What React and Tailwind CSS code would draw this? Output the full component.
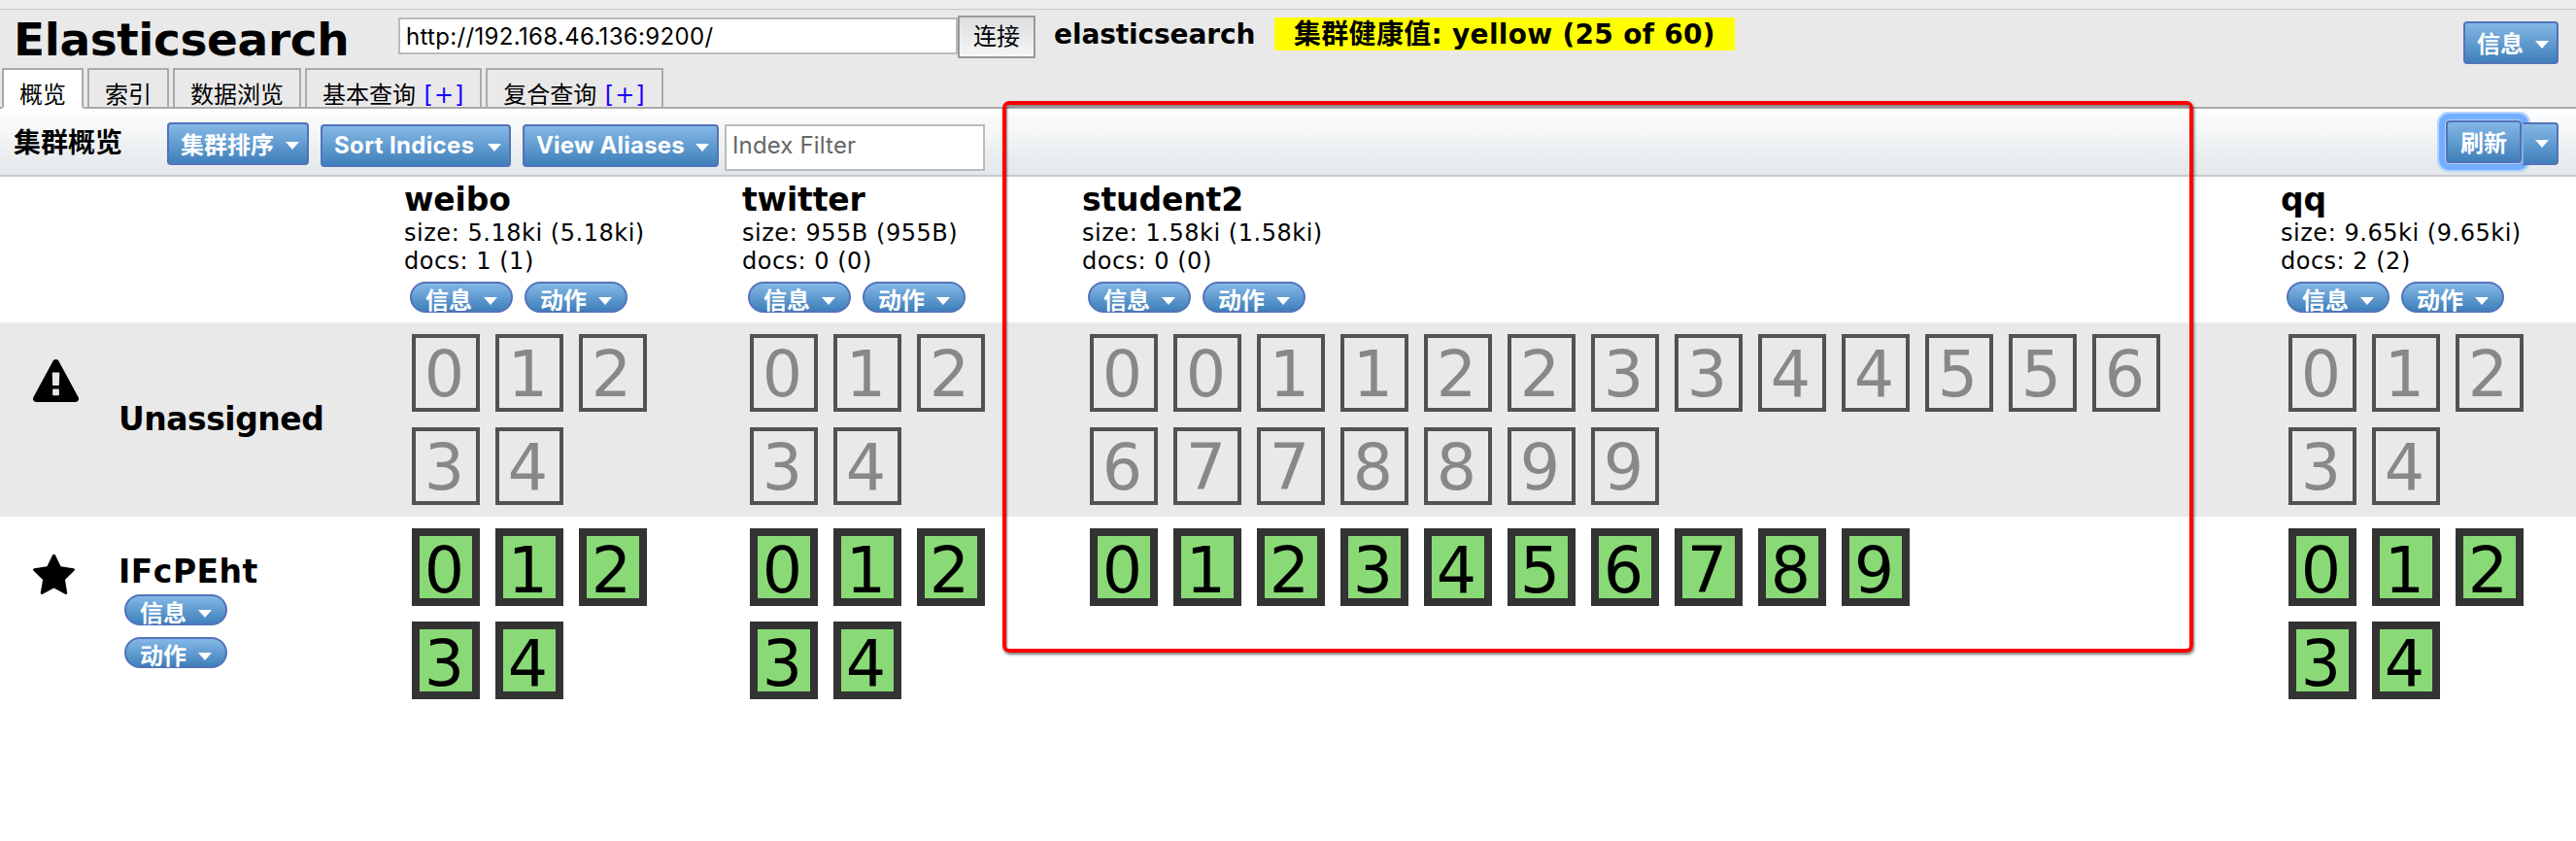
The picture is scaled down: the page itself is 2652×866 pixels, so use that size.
import React from "react";

const UI = "font-['Inter','Noto_Sans_CJK_SC',sans-serif]";
const BLUE = "bg-linear-to-b from-[#84b8e6] to-[#3f80bb] border-2 border-[#5273ba] text-white";

function Arrow({ className = "" }) {
  return (
    <svg className={`h-[8px] w-[14px] shrink-0 ${className}`} viewBox="0 0 14 8">
      <path d="M0 0H14L7 8Z" fill="#fff" />
    </svg>
  );
}

function MenuButton({ label, className = "", labelClass = "" }) {
  return (
    <button className={`flex h-[44px] shrink-0 justify-between rounded-[4px] pr-[8px] pl-[12px] ${BLUE} ${UI} ${className}`}>
      <span className={`text-[24px] font-bold whitespace-nowrap ${labelClass}`}>{label}</span>
      <Arrow className="mt-[18px]" />
    </button>
  );
}

function Pill({ label }) {
  return (
    <button className={`flex h-[32px] w-[106px] shrink-0 justify-between rounded-full pr-[14px] pl-[14px] ${BLUE} ${UI}`}>
      <span className="text-[24px] leading-[35px] font-bold whitespace-nowrap">{label}</span>
      <Arrow className="mt-[14px]" />
    </button>
  );
}

function Tab({ label, plus, active }) {
  return (
    <div
      className={`flex h-[42px] shrink-0 border-2 border-[#aaa] px-[16px] text-[24px] leading-[53px] whitespace-pre ${
        active ? "border-b-white bg-white" : "border-b-[#aaa]"
      }`}
    >
      {label}
      {plus && <span className="tracking-[0.95px] text-[#1a00ff]"> [+]</span>}
    </div>
  );
}

function Shards({ ids, assigned, className }) {
  return (
    <div className={`flex flex-wrap content-start gap-4 pt-[12px] pl-[8px] ${className}`}>
      {ids.split("").map((n, i) => (
        <div
          key={i}
          className={`h-[80px] w-[70px] pr-[3px] text-center text-[65px] ${
            assigned
              ? "border-8 border-[#333] bg-[#8ad977] leading-[71px] text-black"
              : "border-4 border-[#525252] leading-[75px] text-[#888]"
          }`}
        >
          <span className="-mx-2">{n}</span>
        </div>
      ))}
    </div>
  );
}

const INDICES = [
  { name: "weibo", size: "5.18ki (5.18ki)", docs: "1 (1)", un: "01234", on: "01234", w: "w-[348px] pr-[60px]" },
  { name: "twitter", size: "955B (955B)", docs: "0 (0)", un: "01234", on: "01234", w: "w-[350px] pr-[60px]" },
  { name: "student2", size: "1.58ki (1.58ki)", docs: "0 (0)", un: "00112233445566778899", on: "0123456789", w: "w-[1234px] pr-[100px]" },
  { name: "qq", size: "9.65ki (9.65ki)", docs: "2 (2)", un: "01234", on: "01234", w: "w-[304px] pr-[36px]" },
];

export default function App() {
  return (
    <div className="relative h-[866px] w-[2652px] overflow-hidden bg-white font-['DejaVu_Sans','Noto_Sans_CJK_SC',sans-serif] text-black">
      <div className="h-[10px] border-b border-[#c6c6c6] bg-[#eee]" />
      <header className="flex h-[60px] items-start bg-[#e9e9e9] pr-[18px] pl-[14px]">
        <h1 className="w-[396px] text-[47px] leading-[62px] font-bold tracking-[-0.4px]">Elasticsearch</h1>
        <input
          className={`mt-[8px] h-[38px] w-[576px] border-2 border-[#bbb] bg-white px-[6px] text-[24px] tracking-[0.33px] ${UI}`}
          defaultValue="http://192.168.46.136:9200/"
        />
        <button className={`mt-[6px] h-[44px] w-[80px] border-2 border-[#999] bg-linear-to-b from-[#dedede] to-[#f6f6f6] text-[24px] leading-[40px] ${UI}`}>
          连接
        </button>
        <div className="mt-[8px] ml-[19px] w-[227px] text-[28px] leading-[36px] font-bold tracking-[-0.1px]">elasticsearch</div>
        <div className="mt-[8px] h-[34px] w-[474px] bg-[#ff0] pl-[20px] text-[28px] leading-[36px] font-bold tracking-[0.3px] whitespace-nowrap">
          集群健康值: yellow (25 of 60)
        </div>
        <MenuButton label="信息" className="mt-[12px] ml-auto w-[98px]" labelClass="leading-[43px]" />
      </header>
      <nav className="flex h-[42px] gap-1 bg-[#e9e9e9] bg-[linear-gradient(#aaa,#aaa)] bg-[length:100%_2px] bg-bottom bg-no-repeat pl-[2px]">
        <Tab label="概览" active />
        <Tab label="索引" />
        <Tab label="数据浏览" />
        <Tab label="基本查询" plus />
        <Tab label="复合查询" plus />
      </nav>
      <div className="flex h-[70px] items-start border-b-2 border-[#c8cacf] bg-linear-to-b from-[#fdfefe] to-[#e3e7ea] pr-[18px] pl-[14px]">
        <h2 className="w-[158px] text-[28px] leading-[72px] font-bold">集群概览</h2>
        <MenuButton label="集群排序" className="mt-[14px] w-[146px]" labelClass="leading-[43px]" />
        <MenuButton label="Sort Indices" className="mt-[16px] ml-[12px] w-[196px]" labelClass="leading-[39px] tracking-[0.35px]" />
        <MenuButton label="View Aliases" className="mt-[16px] ml-[12px] w-[202px]" labelClass="leading-[39px] tracking-[0.2px]" />
        <input
          className={`mt-[16px] ml-[6px] h-[48px] w-[268px] border-2 border-[#bbb] bg-white px-[6px] pb-[5px] text-[24px] tracking-[0.15px] placeholder:text-[#666] ${UI}`}
          placeholder="Index Filter"
        />
        <div className="ml-auto flex">
          <button className={`mt-[12px] h-[44px] w-[78px] rounded-[4px] text-[24px] leading-[43px] font-bold shadow-[0_0_0_1px_#b7d3f6,0_0_0_7px_#72aeff,0_0_0_9px_#b5d4fd] ${BLUE} ${UI}`}>
            刷新
          </button>
          <button className={`relative mt-[14px] flex h-[44px] w-[38px] justify-end rounded-r-[4px] border-l-[#7fb0e0] pr-[8px] ${BLUE}`}>
            <Arrow className="mt-[16px]" />
          </button>
        </div>
      </div>

      <div className="flex h-[150px] pl-[416px]">
        {INDICES.map((ix) => (
          <div key={ix.name} className={`shrink-0 pt-[5px] text-[24px] ${ix.w}`}>
            <div className="text-[33px] leading-[38px] font-bold tracking-[-0.15px]">{ix.name}</div>
            <div className="leading-[30px] tracking-[0.53px] whitespace-nowrap">size: {ix.size}</div>
            <div className="leading-[29px] tracking-[0.5px] whitespace-nowrap">docs: {ix.docs}</div>
            <div className="mt-[6px] flex gap-3 pl-[6px]">
              <Pill label="信息" />
              <Pill label="动作" />
            </div>
          </div>
        ))}
      </div>

      <div className="flex h-[200px] bg-[#e9e9e9]">
        <div className="w-[122px] shrink-0 pt-[38px] pl-[34px]">
          <svg className="h-[44px] w-[47px]" viewBox="0 0 1792 1664" preserveAspectRatio="none">
            <path d="M1024 1375v-190q0-14-9.500-23.500t-22.500-9.500h-192q-13 0-22.500 9.500t-9.500 23.500v190q0 14 9.500 23.500t22.500 9.500h192q13 0 22.500-9.500t9.500-23.500zm-2-374l18-459q0-12-10-19-13-11-24-11h-220q-11 0-24 11-10 7-10 21l17 457q0 10 10 16.500t24 6.500h185q14 0 23.500-6.500t10.500-16.500zm-14-934l768 1408q35 63-2 126-17 29-46.500 46t-63.500 17h-1536q-34 0-63.500-17t-46.500-46q-37-63-2-126l768-1408q17-31 47-49t65-18 65 18 47 49z" />
          </svg>
        </div>
        <div className="w-[294px] shrink-0 pt-[80px] text-[33px] leading-[40px] font-bold tracking-[-0.5px]">Unassigned</div>
        {INDICES.map((ix) => (
          <Shards key={ix.name} ids={ix.un} className={`shrink-0 ${ix.w}`} />
        ))}
      </div>

      <div className="flex h-[200px]">
        <div className="w-[122px] shrink-0 pt-[39px] pl-[34px]">
          <svg className="h-[41px] w-[43px]" viewBox="64 59 1664 1560" preserveAspectRatio="none">
            <path d="M1728 647q0 22-26 48l-363 354 86 500q1 7 1 20 0 21-10.500 35.500t-30.500 14.500q-19 0-40-12l-449-236-449 236q-22 12-40 12-21 0-31.500-14.500t-10.500-35.500q0-6 2-20l86-500-364-354q-25-27-25-48 0-37 56-46l502-73 225-455q19-41 49-41t49 41l225 455 502 73q56 9 56 46z" />
          </svg>
        </div>
        <div className="flex w-[294px] shrink-0 flex-col pt-[36px]">
          <div className="text-[33px] leading-[41px] font-bold tracking-[0.5px]">IFcPEht</div>
          <div className="mt-[3px] flex flex-col gap-3 pl-[6px]">
            <Pill label="信息" />
            <Pill label="动作" />
          </div>
        </div>
        {INDICES.map((ix) => (
          <Shards key={ix.name} ids={ix.on} assigned className={`shrink-0 ${ix.w}`} />
        ))}
      </div>

      <div className="pointer-events-none absolute top-[104px] left-[1032px] h-[568px] w-[1226px] rounded-[7px] border-4 border-[#f00] shadow-[1px_2px_3px_rgba(0,0,0,0.55),inset_1px_2px_2px_rgba(0,0,0,0.45)]" />
    </div>
  );
}
